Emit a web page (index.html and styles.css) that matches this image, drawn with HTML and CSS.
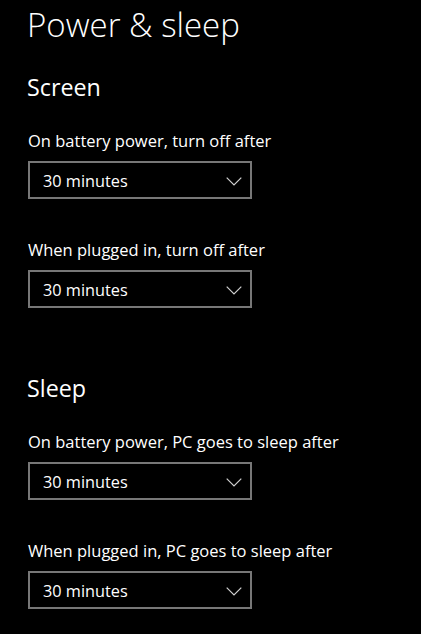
FILE: index.html
```html
<!DOCTYPE html>
<html>
<head>
<meta charset="utf-8">
<link rel="stylesheet" href="styles.css">
</head>
<body>
<main class="page">
  <h1 class="title">Power &amp; sleep</h1>

  <section class="group group-screen">
    <h2 class="group-title">Screen</h2>
    <div class="setting">
      <div class="label">On battery power, turn off after</div>
      <div class="combo"><span class="combo-value">30 minutes</span>
        <svg class="chev" width="16" height="9" viewBox="0 0 16 9"><path d="M0.7 0.7 L8 8 L15.3 0.7" fill="none" stroke="#d0d0d0" stroke-width="1.2"/></svg>
      </div>
    </div>
    <div class="setting">
      <div class="label">When plugged in, turn off after</div>
      <div class="combo"><span class="combo-value">30 minutes</span>
        <svg class="chev" width="16" height="9" viewBox="0 0 16 9"><path d="M0.7 0.7 L8 8 L15.3 0.7" fill="none" stroke="#d0d0d0" stroke-width="1.2"/></svg>
      </div>
    </div>
  </section>

  <section class="group group-sleep">
    <h2 class="group-title">Sleep</h2>
    <div class="setting">
      <div class="label">On battery power, PC goes to sleep after</div>
      <div class="combo"><span class="combo-value">30 minutes</span>
        <svg class="chev" width="16" height="9" viewBox="0 0 16 9"><path d="M0.7 0.7 L8 8 L15.3 0.7" fill="none" stroke="#d0d0d0" stroke-width="1.2"/></svg>
      </div>
    </div>
    <div class="setting">
      <div class="label">When plugged in, PC goes to sleep after</div>
      <div class="combo"><span class="combo-value">30 minutes</span>
        <svg class="chev" width="16" height="9" viewBox="0 0 16 9"><path d="M0.7 0.7 L8 8 L15.3 0.7" fill="none" stroke="#d0d0d0" stroke-width="1.2"/></svg>
      </div>
    </div>
  </section>
</main>
</body>
</html>
```

FILE: styles.css
```css
html, body {
  margin: 0;
  padding: 0;
  background: #000;
}
body {
  color: #fff;
  font-family: "Open Sans", "Noto Sans", sans-serif;
  width: 421px;
  height: 634px;
  overflow: hidden;
}
.page {
  padding: 5px 0 0 27px;
}
.title {
  margin: 0;
  font-size: 33px;
  font-weight: 300;
  line-height: 40px;
}
.group-title {
  margin: 0;
  font-size: 23.3px;
  font-weight: 400;
  line-height: 30px;
}
.group-screen {
  margin-top: 27px;
}
.group-sleep {
  margin-top: 65px;
}
.setting {
  margin-top: 28px;
}
.setting + .setting {
  margin-top: 40px;
}
.label {
  font-size: 16.5px;
  line-height: 22px;
  padding-left: 1px;
  white-space: nowrap;
}
.combo {
  margin-top: 9px;
  margin-left: 1px;
  box-sizing: border-box;
  width: 224px;
  height: 38px;
  border: 2px solid #777;
  display: flex;
  align-items: center;
  justify-content: space-between;
  padding: 1px 8px 0 13px;
}
.combo-value {
  font-size: 16.3px;
  line-height: 20px;
}
.chev {
  display: block;
  margin-top: 1px;
}
```
